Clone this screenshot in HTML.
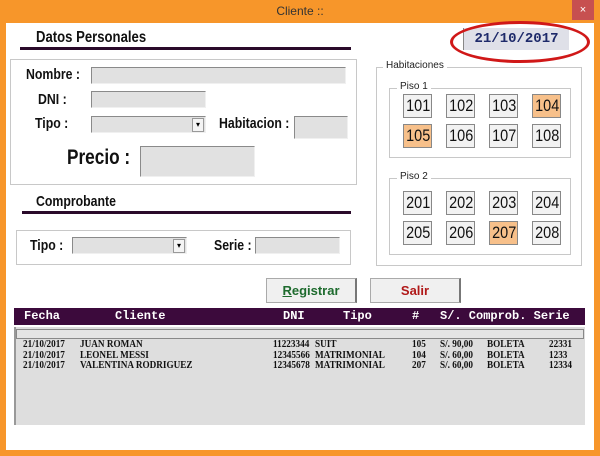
<!DOCTYPE html><html><head><meta charset="utf-8"><style>
*{margin:0;padding:0;box-sizing:border-box}
body{width:600px;height:456px;background:#f7962a;position:relative;overflow:hidden;font-family:"Liberation Sans",sans-serif}
.a{position:absolute}
.client{left:6px;top:23px;width:588px;height:427px;background:#fff}
.inp{position:absolute;background:#e1e1e1;border-top:1px solid #8a8a8a;border-left:1px solid #8a8a8a;border-bottom:1px solid #f0f0f0;border-right:1px solid #f0f0f0}
.lbl{position:absolute;font-size:15px;color:#111;font-weight:bold;transform:scaleX(.82);transform-origin:left}
.box{position:absolute;border:1px solid #c8c8c8}
.bar{position:absolute;height:3px;background:#2a0a2a}
.r{position:absolute;width:29px;height:24px;border:1px solid #888;background:#f2f2f2;font-size:17px;text-align:center;line-height:22px;color:#111}
.r span{display:inline-block;transform:scaleX(.85)}
.o{background:#f7c08a}
.dd{position:absolute;right:1px;top:1px;width:12px;height:14px;background:#f4f4f4;border:1px solid #999;font-size:8px;text-align:center;line-height:12px}
.h{position:absolute;top:309px;color:#fff;font-family:"Liberation Mono",monospace;font-weight:bold;font-size:12px}
.t{position:absolute;font-family:"Liberation Serif",serif;font-weight:bold;font-size:10px;color:#111;line-height:10.5px;transform:scaleX(.92);transform-origin:left}
</style></head><body>
<div class="a" style="left:0;top:0;width:600px;height:23px;text-align:center;font-size:12px;color:#333;line-height:22px">Cliente ::</div>
<div class="a" style="left:572px;top:0;width:22px;height:20px;background:#c75050;color:#fff;font-size:11px;text-align:center;line-height:20px">×</div>
<div class="a client"></div>

<div class="lbl" style="left:36px;top:29px;font-size:16px">Datos Personales</div>
<div class="bar" style="left:20px;top:47px;width:331px"></div>
<div class="a" style="left:463px;top:28px;width:106px;height:22px;background:#dfe0e8;border-left:1px solid #888;font-family:'Liberation Mono',monospace;font-weight:bold;font-size:14px;color:#1e2a6a;text-align:center;line-height:22px">21/10/2017</div>
<div class="a" style="left:450px;top:21px;width:140px;height:42px;border:3px solid #d01818;border-radius:50%"></div>

<div class="box" style="left:10px;top:59px;width:347px;height:126px"></div>
<div class="lbl" style="left:26px;top:66px">Nombre :</div><div class="inp" style="left:91px;top:67px;width:255px;height:17px"></div>
<div class="lbl" style="left:38px;top:91px">DNI :</div><div class="inp" style="left:91px;top:91px;width:115px;height:17px"></div>
<div class="lbl" style="left:35px;top:115px">Tipo :</div><div class="inp" style="left:91px;top:116px;width:115px;height:17px"><div class="dd">▾</div></div>
<div class="lbl" style="left:219px;top:115px">Habitacion :</div><div class="inp" style="left:294px;top:116px;width:54px;height:23px"></div>
<div class="lbl" style="left:67px;top:146px;font-size:21px">Precio :</div><div class="inp" style="left:140px;top:146px;width:115px;height:31px"></div>

<div class="lbl" style="left:36px;top:193px">Comprobante</div>
<div class="bar" style="left:22px;top:211px;width:329px"></div>
<div class="box" style="left:16px;top:230px;width:335px;height:35px"></div>
<div class="lbl" style="left:30px;top:237px">Tipo :</div><div class="inp" style="left:72px;top:237px;width:115px;height:17px"><div class="dd">▾</div></div>
<div class="lbl" style="left:214px;top:237px">Serie :</div><div class="inp" style="left:255px;top:237px;width:85px;height:17px"></div>

<div class="box" style="left:376px;top:67px;width:206px;height:199px"></div>
<div class="a" style="left:383px;top:60px;background:#fff;padding:0 3px;font-size:10px;color:#222">Habitaciones</div>
<div class="box" style="left:389px;top:88px;width:182px;height:70px"></div>
<div class="a" style="left:397px;top:81px;background:#fff;padding:0 3px;font-size:10px;color:#222">Piso 1</div>
<div class="box" style="left:389px;top:178px;width:182px;height:77px"></div>
<div class="a" style="left:397px;top:171px;background:#fff;padding:0 3px;font-size:10px;color:#222">Piso 2</div>
<div class="r" style="left:403px;top:94px"><span>101</span></div><div class="r" style="left:446px;top:94px"><span>102</span></div><div class="r" style="left:489px;top:94px"><span>103</span></div><div class="r o" style="left:532px;top:94px"><span>104</span></div>
<div class="r o" style="left:403px;top:124px"><span>105</span></div><div class="r" style="left:446px;top:124px"><span>106</span></div><div class="r" style="left:489px;top:124px"><span>107</span></div><div class="r" style="left:532px;top:124px"><span>108</span></div>
<div class="r" style="left:403px;top:191px"><span>201</span></div><div class="r" style="left:446px;top:191px"><span>202</span></div><div class="r" style="left:489px;top:191px"><span>203</span></div><div class="r" style="left:532px;top:191px"><span>204</span></div>
<div class="r" style="left:403px;top:221px"><span>205</span></div><div class="r" style="left:446px;top:221px"><span>206</span></div><div class="r o" style="left:489px;top:221px"><span>207</span></div><div class="r" style="left:532px;top:221px"><span>208</span></div>

<div class="a" style="left:266px;top:278px;width:91px;height:25px;background:#f0f0f0;border:1px solid #aaa;border-right:2px solid #777;text-align:center;line-height:23px;font-weight:bold;font-size:13px;color:#1e6b2e"><u>R</u>egistrar</div>
<div class="a" style="left:370px;top:278px;width:91px;height:25px;background:#f0f0f0;border:1px solid #aaa;border-right:2px solid #777;text-align:center;line-height:23px;font-weight:bold;font-size:13px;color:#b01818">Salir</div>

<div class="a" style="left:14px;top:308px;width:571px;height:17px;background:#3c0a3c"></div>
<div class="h" style="left:24px">Fecha</div><div class="h" style="left:115px">Cliente</div><div class="h" style="left:283px">DNI</div><div class="h" style="left:343px">Tipo</div><div class="h" style="left:412px">#</div><div class="h" style="left:440px">S/. Comprob. Serie</div>
<div class="a" style="left:14px;top:327px;width:571px;height:98px;background:#dedede;border-left:2px solid #999"></div>
<div class="a" style="left:16px;top:329px;width:568px;height:10px;border:1px solid #888;background:#e4e4e4"></div>
<div class="t" style="left:23px;top:340px">21/10/2017<br>21/10/2017<br>21/10/2017</div>
<div class="t" style="left:80px;top:340px">JUAN ROMAN<br>LEONEL MESSI<br>VALENTINA RODRIGUEZ</div>
<div class="t" style="left:273px;top:340px">11223344<br>12345566<br>12345678</div>
<div class="t" style="left:315px;top:340px">SUIT<br>MATRIMONIAL<br>MATRIMONIAL</div>
<div class="t" style="left:412px;top:340px">105<br>104<br>207</div>
<div class="t" style="left:440px;top:340px">S/. 90,00<br>S/. 60,00<br>S/. 60,00</div>
<div class="t" style="left:487px;top:340px">BOLETA<br>BOLETA<br>BOLETA</div>
<div class="t" style="left:549px;top:340px">22331<br>1233<br>12334</div>
</body></html>
